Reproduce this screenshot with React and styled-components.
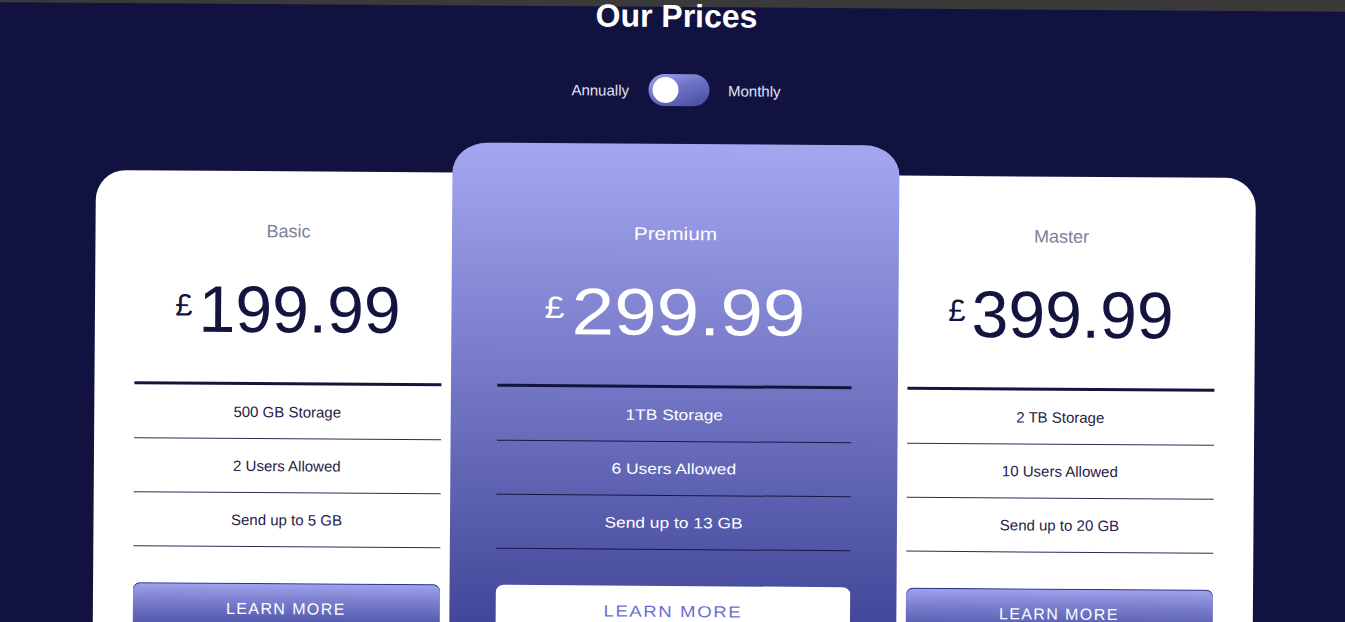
import React from "react";
import styled, { createGlobalStyle } from "styled-components";

const GlobalStyle = createGlobalStyle`
  html, body {
    margin: 0;
    padding: 0;
    overflow: hidden;
    background: #3a3a3a;
    font-family: "Liberation Sans", Arial, sans-serif;
  }
  * { box-sizing: border-box; }
`;

const Page = styled.main`
  margin-top: 7px;
  margin-left: -21px;
  width: calc(100% + 46px);
  min-height: 720px;
  background: #111240;
  transform: rotate(0.4deg);
  transform-origin: 50% 300px;
  display: flex;
  flex-direction: column;
  align-items: center;
`;

const Title = styled.h1`
  margin: -9px 0 0;
  font-size: 32px;
  line-height: 37px;
  font-weight: 700;
  color: #ffffff;
`;

const ToggleRow = styled.div`
  margin-top: 39px;
  display: flex;
  align-items: center;
  gap: 19px;
`;

const ToggleLabel = styled.span`
  font-size: 15px;
  color: #e2e2f2;
`;

const Switch = styled.div`
  width: 61px;
  height: 32px;
  border-radius: 16px;
  padding: 0 4px;
  display: flex;
  align-items: center;
  background: linear-gradient(160deg, #a3a6ee 0%, #6e73c4 45%, #464b9e 100%);
`;

const Knob = styled.span`
  width: 26px;
  height: 26px;
  border-radius: 50%;
  background: #ffffff;
`;

const CardRow = styled.div`
  margin-top: 38px;
  display: flex;
  align-items: flex-start;
  justify-content: center;
`;

const Card = styled.section`
  position: relative;
  width: ${(p) => (p.$featured ? 386 : 387)}px;
  min-height: ${(p) => (p.$featured ? 560 : 530)}px;
  margin-top: ${(p) => (p.$featured ? 0 : 30)}px;
  padding: ${(p) => (p.$featured ? 79 : 49)}px 40px 0;
  border-radius: 30px;
  z-index: ${(p) => (p.$featured ? 2 : 1)};
  transform: ${(p) => (p.$featured ? "scaleX(1.158)" : "none")};
  background: ${(p) =>
    p.$featured
      ? "linear-gradient(180deg, #a4a7f0 0px, #787cc9 216px, #424799 478px)"
      : "#ffffff"};
  color: ${(p) => (p.$featured ? "#ffffff" : "#13143f")};
  display: flex;
  flex-direction: column;
  align-items: stretch;
`;

const PlanName = styled.h2`
  margin: 0;
  font-size: 18px;
  line-height: 22px;
  font-weight: 400;
  text-align: center;
  color: ${(p) => (p.$featured ? "#ffffff" : "#7c8099")};
`;

const Price = styled.div`
  margin-top: 34px;
  display: flex;
  justify-content: center;
  align-items: flex-start;
`;

const Currency = styled.span`
  margin-top: 15px;
  margin-right: 6px;
  font-size: 31px;
  line-height: 30px;
`;

const Amount = styled.span`
  font-size: 66px;
  line-height: 66px;
`;

const Features = styled.ul`
  list-style: none;
  margin: 40px 0 0;
  padding: 0;
  border-top: 3px solid #13143f;
`;

const Feature = styled.li`
  height: 54px;
  display: flex;
  align-items: center;
  justify-content: center;
  font-size: 15px;
  border-bottom: 1px solid ${(p) => (p.$featured ? "#161845" : "#2a2c55")};
  color: ${(p) => (p.$featured ? "#ffffff" : "#1f2148")};
`;

const Button = styled.button`
  margin-top: 36px;
  height: 52px;
  border: none;
  border-radius: 7px;
  font-family: inherit;
  font-size: 16px;
  letter-spacing: 1.4px;
  text-transform: uppercase;
  cursor: pointer;
  color: ${(p) => (p.$featured ? "#6a6fd0" : "#ffffff")};
  background: ${(p) =>
    p.$featured
      ? "#ffffff"
      : "linear-gradient(180deg, #a0a3ec 0%, #7a7ecc 35%, #5a5eb2 70%, #474c9f 100%)"};
  box-shadow: ${(p) => (p.$featured ? "none" : "inset 0 1px 0 #2c2f7a")};
`;

const plans = [
  {
    name: "Basic",
    price: "199.99",
    features: ["500 GB Storage", "2 Users Allowed", "Send up to 5 GB"],
  },
  {
    name: "Premium",
    price: "299.99",
    featured: true,
    features: ["1TB Storage", "6 Users Allowed", "Send up to 13 GB"],
  },
  {
    name: "Master",
    price: "399.99",
    features: ["2 TB Storage", "10 Users Allowed", "Send up to 20 GB"],
  },
];

export default function App() {
  return (
    <>
      <GlobalStyle />
      <Page>
        <Title>Our Prices</Title>
        <ToggleRow>
          <ToggleLabel>Annually</ToggleLabel>
          <Switch>
            <Knob />
          </Switch>
          <ToggleLabel>Monthly</ToggleLabel>
        </ToggleRow>
        <CardRow>
          {plans.map((plan) => (
            <Card key={plan.name} $featured={plan.featured}>
              <PlanName $featured={plan.featured}>{plan.name}</PlanName>
              <Price>
                <Currency>£</Currency>
                <Amount>{plan.price}</Amount>
              </Price>
              <Features>
                {plan.features.map((f) => (
                  <Feature key={f} $featured={plan.featured}>
                    {f}
                  </Feature>
                ))}
              </Features>
              <Button $featured={plan.featured}>Learn More</Button>
            </Card>
          ))}
        </CardRow>
      </Page>
    </>
  );
}
